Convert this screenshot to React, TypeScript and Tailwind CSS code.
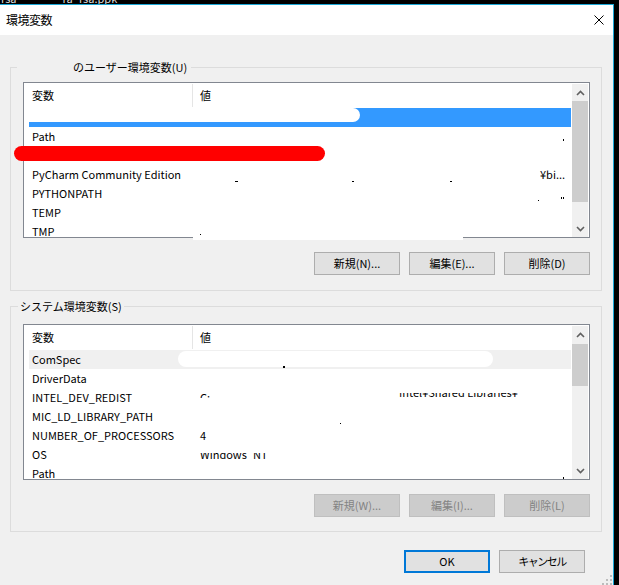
import React from "react";

function Chevron({ down }: { down?: boolean }) {
  return (
    <svg width="9" height="6" viewBox="0 0 9 6">
      <polyline
        points={down ? "1,1 4.5,4.5 8,1" : "1,5 4.5,1.5 8,5"}
        fill="none"
        stroke="#606060"
        strokeWidth="1.6"
      />
    </svg>
  );
}

function ScrollBar({ thumbClass }: { thumbClass: string }) {
  return (
    <div className="w-[16px] mr-[1px] mt-[1px] flex flex-col bg-[#f0f0f0] shrink-0">
      <div className="h-[17px] flex items-center justify-center shrink-0">
        <Chevron />
      </div>
      <div className="flex-1 flex flex-col">
        <div className={"bg-[#cdcdcd] w-full " + thumbClass} />
      </div>
      <div className="h-[17px] flex items-center justify-center shrink-0">
        <Chevron down />
      </div>
    </div>
  );
}

function Row({
  name,
  value,
  className,
  children,
}: {
  name: string;
  value?: string;
  className?: string;
  children?: React.ReactNode;
}) {
  return (
    <div
      className={
        "relative h-[19px] shrink-0 ml-[5px] mr-[1px] flex items-center leading-[19px] " +
        (className ?? "")
      }
    >
      <div className="w-[171px] pl-[3px] whitespace-nowrap">{name}</div>
      <div className="flex-1 whitespace-nowrap">{value}</div>
      {children}
    </div>
  );
}

function ListView({
  children,
  thumbClass,
  extra,
}: {
  children: React.ReactNode;
  thumbClass: string;
  extra?: React.ReactNode;
}) {
  return (
    <div className="relative h-[156px] border border-[#828790] bg-white flex">
      <div className="flex-1 flex flex-col overflow-hidden">
        <div className="h-[25px] flex shrink-0">
          <div className="w-[168px] pl-[8px] flex items-center">変数</div>
          <div className="w-px bg-[#e5e5e5] mt-[1px] h-[23px]" />
          <div className="pl-[7px] flex items-center">値</div>
        </div>
        {children}
      </div>
      <ScrollBar thumbClass={thumbClass} />
      {extra}
    </div>
  );
}

function Btn({
  label,
  disabled,
  primary,
  tight,
}: {
  label: string;
  disabled?: boolean;
  primary?: boolean;
  tight?: boolean;
}) {
  const cls = disabled
    ? "bg-[#cccccc] border border-[#bfbfbf] text-[#838383]"
    : primary
    ? "bg-[#e1e1e1] border-2 border-[#0078d7] text-black"
    : "bg-[#e1e1e1] border border-[#adadad] text-black";
  return (
    <div className={"w-[86px] h-[23px] flex items-center justify-center leading-none " + cls}>
      <span className={tight ? "tracking-[-1.5px]" : ""}>{label}</span>
    </div>
  );
}

function Dot({ className }: { className: string }) {
  return <div className={"absolute bg-black " + className} />;
}

export default function App() {
  return (
    <div className="w-[619px] h-[585px] bg-black overflow-hidden font-['Noto_Sans_CJK_JP','Noto_Sans',sans-serif] text-[11px] text-black">
      {/* background window strip */}
      <div className="h-[4px] overflow-hidden flex text-[#dcdcdc] leading-[14px] whitespace-nowrap">
        <span className="-mt-[9px] ml-[1px]">rsa</span>
        <span className="-mt-[9px] ml-[46px]">ra_rsa.ppk</span>
      </div>
      <div className="w-[614px] h-[581px] border-t border-r border-[#1aa7d6] flex flex-col">
        {/* title bar */}
        <div className="h-[30px] bg-white flex items-center justify-between pl-[6px] pr-[9px] shrink-0">
          <span className="text-[12px] tracking-[-0.5px]">環境変数</span>
          <svg width="10" height="10" viewBox="0 0 10 10" className="mb-[1px]">
            <path d="M0.5 0.5 L9.5 9.5 M9.5 0.5 L0.5 9.5" stroke="#000" strokeWidth="1" />
          </svg>
        </div>

        {/* body */}
        <div className="flex-1 bg-[#f0f0f0] relative flex flex-col">
          {/* user group */}
          <div className="relative mt-[32px] ml-[10px] w-[592px] border border-[#dcdcdc] pt-[14px] pl-[12px] pr-[11px] pb-[15px]">
            <div className="absolute left-[6px] -top-[9px] leading-[16px] bg-[#f0f0f0] pl-[56px] pr-[4px] whitespace-nowrap">
              のユーザー環境変数(U)
            </div>
            <ListView
              thumbClass="h-[101px]"
              extra={
                <>
                  <div className="absolute left-[-10px] top-[63px] w-[311px] h-[15px] rounded-full bg-[#ff0000]" />
                  <div className="absolute left-[169px] bottom-[-3px] w-[270px] h-[3px] bg-white" />
                </>
              }
            >
              <Row name="" className="bg-[#3399ff]">
                <div className="absolute left-0 top-0 w-[331px] h-[14px] rounded-r-full bg-white" />
              </Row>
              <Row name="Path">
                <Dot className="left-[534px] top-[12px] w-px h-[2px]" />
              </Row>
              <Row name="" />
              <Row name="PyCharm Community Edition">
                <Dot className="left-[206px] top-[16px] w-[3px] h-px" />
                <Dot className="left-[323px] top-[16px] w-[2px] h-px" />
                <Dot className="left-[421px] top-[16px] w-[2px] h-px" />
                <span className="absolute left-[511px] top-0 leading-[19px]">¥bi...</span>
              </Row>
              <Row name="PYTHONPATH">
                <Dot className="left-[509px] top-[16px] w-px h-px" />
                <Dot className="left-[532px] top-[13px] w-px h-[2px]" />
                <Dot className="left-[534px] top-[13px] w-px h-[2px]" />
              </Row>
              <Row name="TEMP" />
              <Row name="TMP">
                <Dot className="left-[171px] top-[12px] w-px h-px" />
              </Row>
            </ListView>
            <div className="mt-[14px] flex justify-end gap-[9px]">
              <Btn label="新規(N)..." />
              <Btn label="編集(E)..." />
              <Btn label="削除(D)" />
            </div>
          </div>

          {/* system group */}
          <div className="relative mt-[15px] ml-[10px] w-[592px] border border-[#dcdcdc] pt-[17px] pl-[12px] pr-[11px] pb-[14px]">
            <div className="absolute left-[7px] -top-[9px] leading-[16px] bg-[#f0f0f0] px-[2px] whitespace-nowrap">
              システム環境変数(S)
            </div>
            <ListView thumbClass="mt-[1px] h-[42px]">
              <Row name="ComSpec" className="bg-[#f0f0f0]">
                <div className="absolute left-[149px] top-[1px] w-[315px] h-[16px] rounded-full bg-white" />
                <Dot className="left-[254px] top-[16px] w-[2px] h-[2px]" />
              </Row>
              <Row name="DriverData" />
              <Row name="INTEL_DEV_REDIST">
                <div className="absolute left-[171px] top-[5px] h-[5px] overflow-hidden">
                  <div className="-mt-[5px] leading-[19px] whitespace-nowrap">C:</div>
                </div>
                <div className="absolute left-[370px] top-[5px] h-[5px] overflow-hidden">
                  <div className="-mt-[10px] leading-[19px] whitespace-nowrap">Intel¥Shared Libraries¥</div>
                </div>
              </Row>
              <Row name="MIC_LD_LIBRARY_PATH">
                <Dot className="left-[311px] top-[16px] w-px h-px" />
              </Row>
              <Row name="NUMBER_OF_PROCESSORS" value="4" />
              <Row name="OS">
                <div className="absolute left-[171px] top-[8px] h-[7px] overflow-hidden">
                  <div className="-mt-[8px] leading-[19px] whitespace-nowrap">Windows_NT</div>
                </div>
              </Row>
              <Row name="Path">
                <Dot className="left-[534px] top-[13px] w-px h-[2px]" />
              </Row>
            </ListView>
            <div className="mt-[14px] flex justify-end gap-[9px]">
              <Btn label="新規(W)..." disabled />
              <Btn label="編集(I)..." disabled />
              <Btn label="削除(L)" disabled />
            </div>
          </div>

          {/* dialog buttons */}
          <div className="mt-[18px] flex justify-end gap-[9px] pr-[28px]">
            <Btn label="OK" primary />
            <Btn label="キャンセル" tight />
          </div>

          {/* size gripper */}
          <svg width="10" height="10" viewBox="0 0 10 10" className="absolute right-[1px] bottom-0">
            <rect x="8" y="0" width="2" height="2" fill="#bcbcbc" />
            <rect x="4" y="4" width="2" height="2" fill="#bcbcbc" />
            <rect x="8" y="4" width="2" height="2" fill="#bcbcbc" />
            <rect x="0" y="8" width="2" height="2" fill="#bcbcbc" />
            <rect x="4" y="8" width="2" height="2" fill="#bcbcbc" />
            <rect x="8" y="8" width="2" height="2" fill="#bcbcbc" />
          </svg>
        </div>
      </div>
    </div>
  );
}
